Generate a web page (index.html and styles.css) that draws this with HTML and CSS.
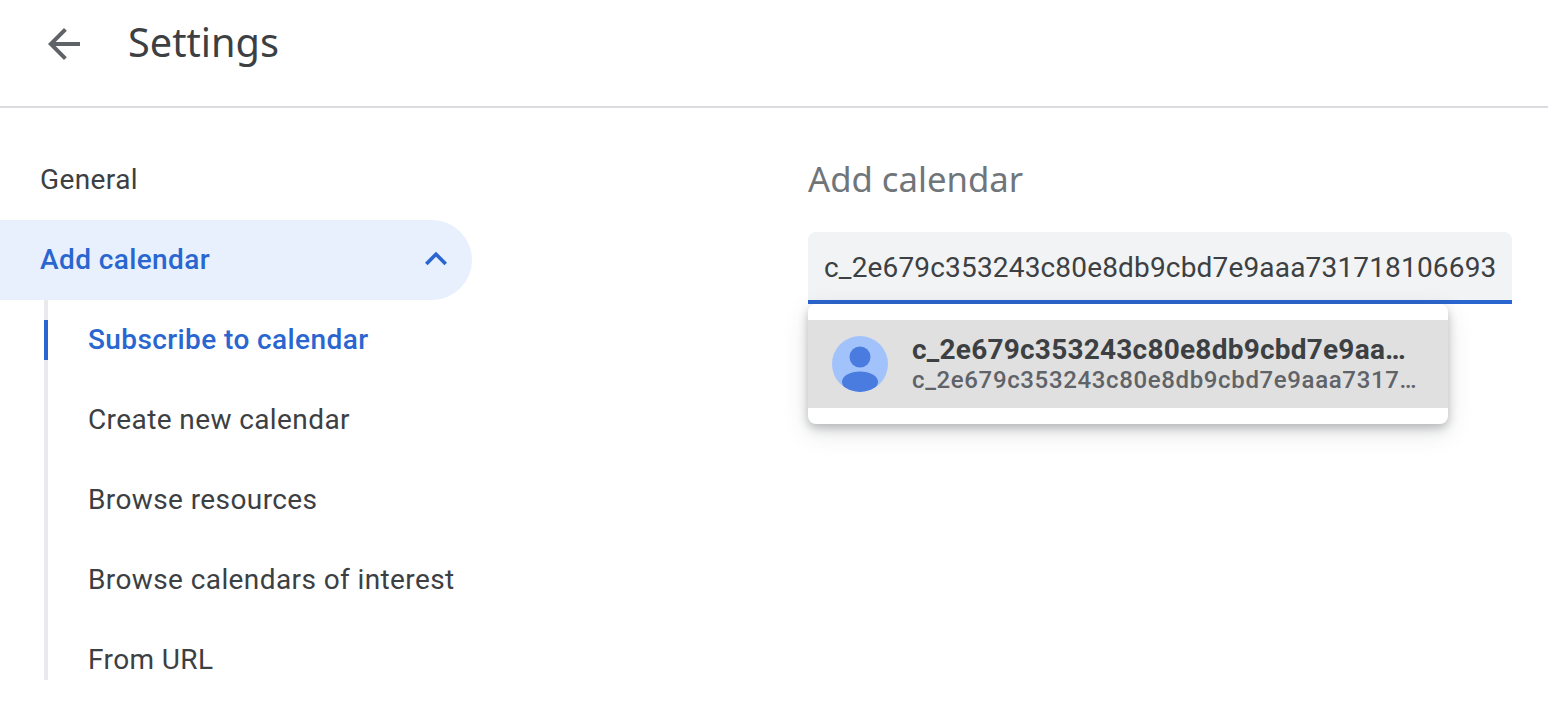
FILE: index.html
```html
<!DOCTYPE html>
<html lang="en">
<head>
    <meta charset="UTF-8">
    <meta name="viewport" content="width=device-width, initial-scale=1.0">
    <title>Settings</title>
    <link rel="stylesheet" href="styles.css">
</head>
<body>

    <header class="topbar">
        <svg class="back" viewBox="0 0 24 24" width="48" height="48">
            <path d="M20 11H7.830l5.590-5.590L12 4l-8 8 8 8 1.410-1.410L7.830 13H20v-2z"/>
        </svg>
        <h1>Settings</h1>
    </header>

    <div class="page">
        <nav class="sidebar">
            <a class="nav-item">General</a>
            <a class="nav-item active">
                Add calendar
                <svg class="chevron" viewBox="0 0 24 24" width="44" height="44">
                    <path d="M12 8l-6 6 1.410 1.410L12 10.830l4.590 4.580L18 14z"/>
                </svg>
            </a>
            <div class="subnav">
                <a class="sub-item current">Subscribe to calendar</a>
                <a class="sub-item">Create new calendar</a>
                <a class="sub-item">Browse resources</a>
                <a class="sub-item">Browse calendars of interest</a>
                <a class="sub-item">From URL</a>
            </div>
        </nav>

        <main class="content">
            <h2>Add calendar</h2>
            <div class="field">
                <div class="input">c_2e679c353243c80e8db9cbd7e9aaa731718106693</div>
                <div class="dropdown">
                    <div class="option">
                        <svg class="avatar" viewBox="0 0 56 56" width="56" height="56">
                            <defs>
                                <clipPath id="avatar-clip"><circle cx="28" cy="28" r="28"/></clipPath>
                            </defs>
                            <circle cx="28" cy="28" r="28" fill="#a1c2fa"/>
                            <circle cx="28" cy="21" r="10.500" fill="#4a7bdf"/>
                            <ellipse cx="28" cy="46" rx="18" ry="10.500" fill="#4a7bdf" clip-path="url(#avatar-clip)"/>
                        </svg>
                        <div class="option-text">
                            <div class="option-name">c_2e679c353243c80e8db9cbd7e9aaa731718106693</div>
                            <div class="option-mail">c_2e679c353243c80e8db9cbd7e9aaa731718106693@group.calendar.google.com</div>
                        </div>
                    </div>
                </div>
            </div>
        </main>
    </div>

</body>
</html>
```

FILE: styles.css
```css
body {
    margin: 0;
    background-color: #fff;
    color: #3c4043;
    font-family: Roboto, Arial, sans-serif;
    font-size: 28px;
    letter-spacing: 0.4px;
}

.topbar {
    display: flex;
    align-items: center;
    height: 106px;
    padding-left: 40px;
    padding-bottom: 20px;
    box-sizing: border-box;
    box-shadow: 0 2px 0 #dadce0;
}

.back {
    fill: #5f6368;
    margin-top: 2px;
}

.topbar h1 {
    margin: 0 0 2px 40px;
    font-family: "Noto Sans", Arial, sans-serif;
    font-size: 39.700px;
    font-weight: 400;
    letter-spacing: 0;
}

.page {
    display: flex;
    padding-top: 34px;
}

.sidebar {
    width: 472px;
    margin-right: 336px;
}

.nav-item {
    display: flex;
    align-items: center;
    justify-content: space-between;
    height: 80px;
    padding: 0 6px 2px 40px;
    box-sizing: border-box;
    border-radius: 0 40px 40px 0;
}

.nav-item.active {
    padding-right: 14px;
    background-color: #e8f0fe;
    color: #2a66d0;
    font-weight: 500;
}

.chevron {
    fill: #2a66d0;
}

.subnav {
    margin: 0 0 0 44px;
    padding-top: 20px;
    height: 360px;
    border-left: 4px solid #e8eaed;
}

.sub-item {
    display: flex;
    align-items: center;
    height: 40px;
    margin: 0 0 40px -4px;
    padding: 0 0 2px 40px;
    box-sizing: border-box;
    border-left: 4px solid transparent;
}

.sub-item.current {
    border-left-color: #2a66d0;
    color: #2a66d0;
    font-weight: 500;
}

.content {
    width: 704px;
}

.content h2 {
    margin: 0;
    height: 92px;
    padding-top: 17px;
    box-sizing: border-box;
    font-family: "Noto Sans", Arial, sans-serif;
    font-size: 34.700px;
    font-weight: 400;
    letter-spacing: 0;
    color: #70757a;
    line-height: 44px;
}

.field {
    position: relative;
}

.input {
    height: 68px;
    padding: 0 16px;
    line-height: 72px;
    letter-spacing: 0.17px;
    background-color: #f1f3f4;
    border-bottom: 4px solid #2a66d0;
    border-radius: 8px 8px 0 0;
    white-space: nowrap;
    overflow: hidden;
}

.dropdown {
    position: absolute;
    top: 72px;
    left: 0;
    width: 640px;
    padding: 16px 0;
    background-color: #fff;
    border-radius: 8px;
    box-shadow: 0 4px 10px rgba(60, 64, 67, 0.3), 0 8px 24px rgba(60, 64, 67, 0.15);
}

.option {
    display: flex;
    align-items: center;
    gap: 24px;
    height: 88px;
    padding: 0 24px;
    background-color: #e0e0e0;
}

.avatar {
    flex-shrink: 0;
}

.option-text {
    width: 508px;
    font-weight: 700;
}

.option-name,
.option-mail {
    white-space: nowrap;
    overflow: hidden;
    text-overflow: ellipsis;
}

.option-name {
    font-size: 28px;
    line-height: 32px;
    letter-spacing: 0.23px;
}

.option-mail {
    font-size: 24px;
    line-height: 28px;
    font-weight: 500;
    letter-spacing: 0.64px;
    color: #5f6368;
}
```
